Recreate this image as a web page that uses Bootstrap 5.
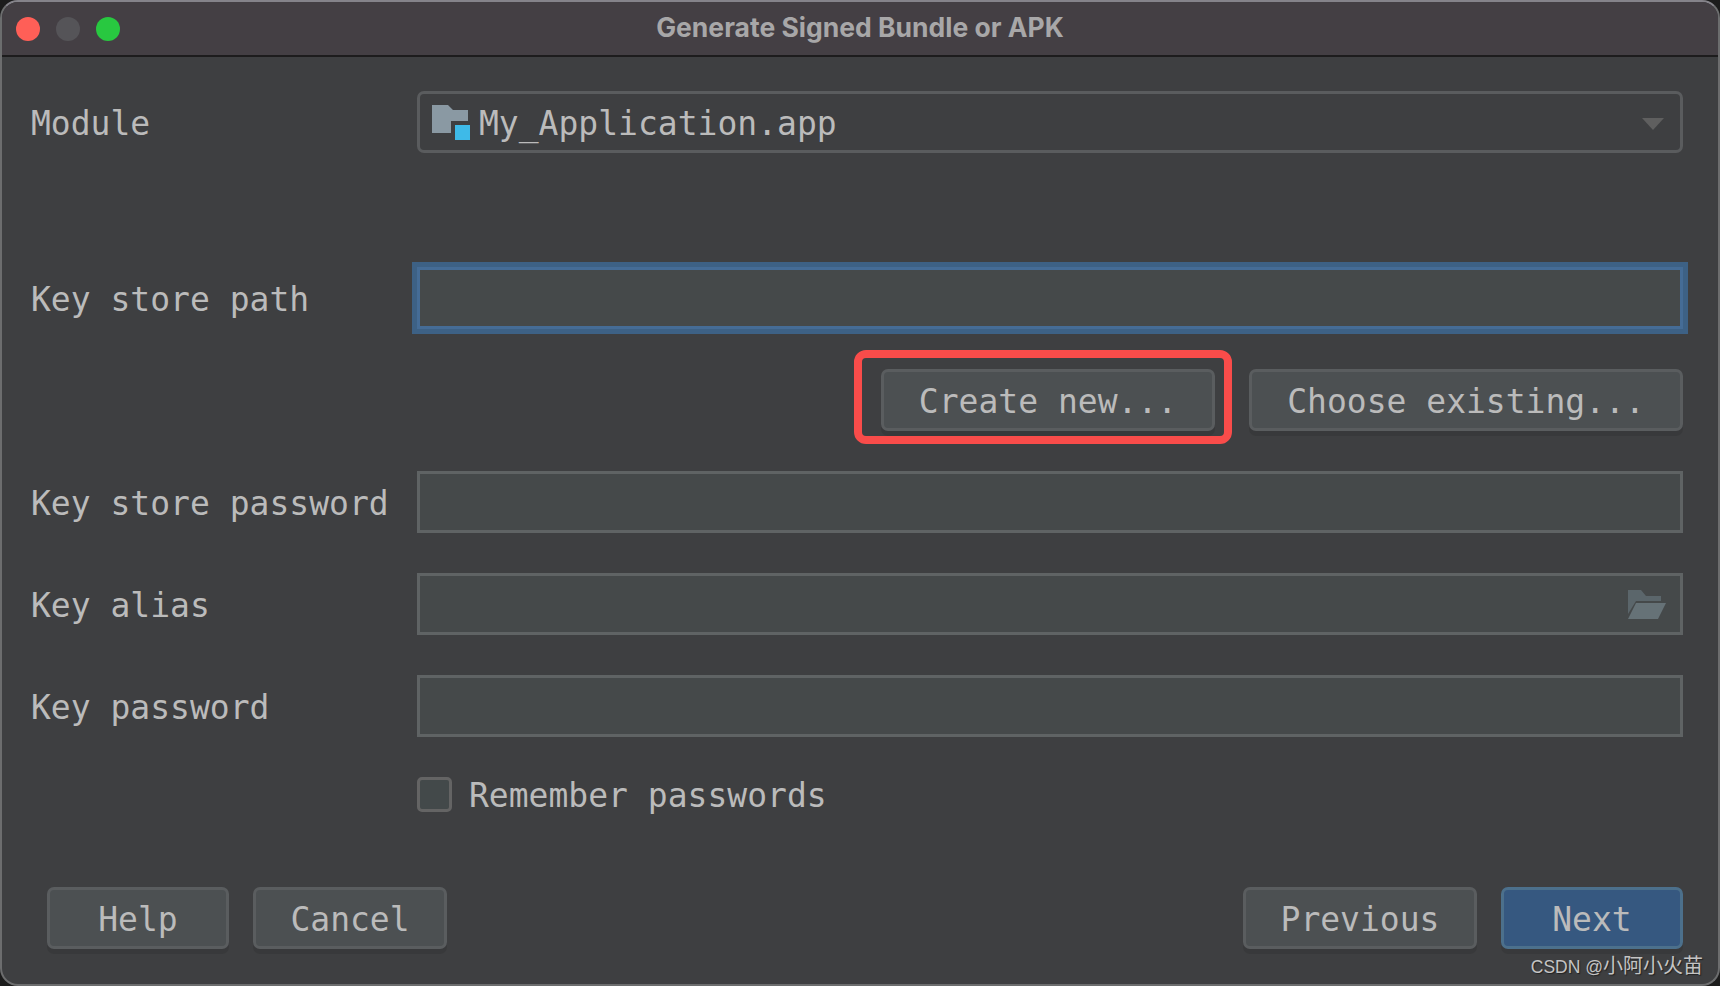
<!DOCTYPE html>
<html lang="en">
<head>
<meta charset="utf-8">
<title>Generate Signed Bundle or APK</title>
<link href="https://cdn.jsdelivr.net/npm/bootstrap@5.3.0/dist/css/bootstrap.min.css" rel="stylesheet">
<style>
html, body { height: 100%; }
body { background: #1c1c1c; overflow: hidden; font-family: "DejaVu Sans Mono", "Liberation Mono", monospace; font-size: 33px; color: #bbbbbb; }
.win { position: relative; width: 1720px; height: 986px; background: #3e3f41; border: 2px solid #6c6d6e; border-top-color: #85838a; border-radius: 18px; overflow: hidden; }
.titlebar { height: 55px; background: #443f44; border-bottom: 2px solid #1d1c1d; position: relative; }
.light { width: 24px; height: 24px; border-radius: 50%; }
.l-red { background: #ff5f57; }
.l-off { background: #555458; }
.l-green { background: #28c840; }
.lights { gap: 16px; padding-left: 14px; }
.wintitle { position: absolute; left: 0; right: 0; top: 9px; text-align: center; font-family: Inter, "Liberation Sans", sans-serif; font-weight: 700; font-size: 26.5px; line-height: 32px; color: #a8a7a8; }
.content { padding: 34px 35px 0 29px; }
.fieldrow { height: 62px; }
.lab { width: 386px; flex: none; line-height: 62px; padding-top: 2px; white-space: pre; }
.form-control.dark-input, .dark-select { flex: 1 1 auto; height: 62px; background: #45494a; border: 3px solid #5f6364; border-radius: 0; color: #bbbbbb; font-size: 33px; box-shadow: none; }
.dark-select { background: #3e3f41; border-color: #5a5c5e; border-radius: 7px; padding-left: 12px; padding-right: 16px; }
.dark-select svg { flex: none; }
.sel-text { margin-left: 9px; padding-top: 3px; }
.arrow-ico { margin-top: 4px; }
.ring { box-shadow: 0 0 0 5px #3d6185 !important; border-color: #456c96 !important; }
.input-wrap { flex: 1 1 auto; position: relative; display: flex; }
.folder-btn { position: absolute; right: 16px; top: 17px; width: 40px; height: 30px; }
.row-path { margin-top: 114px; }
.row-field { margin-top: 40px; }
.actions { height: 62px; margin-top: 40px; gap: 34px; }
.dark-btn.btn { height: 62px; background: #4c5052; border: 3px solid #5a5d5f; border-radius: 7px; color: #bbbbbb; font-size: 33px; line-height: 1; padding: 2px 0 0; box-shadow: 0 5px 0 rgba(0, 0, 0, .09); white-space: pre; }
.dark-btn.b-primary { background: #365880; border-color: #4c708c; }
.b-create { width: 334px; }
.b-choose { width: 434px; }
.b-help { width: 182px; }
.b-cancel { width: 194px; }
.b-prev { width: 234px; }
.b-next { width: 182px; }
.red-box { padding: 11px 9px 5px 19px; margin: -19px -17px -13px -27px; border: 8px solid #f94c4a; border-radius: 12px; }
.check-row { margin-top: 40px; height: 35px; padding-left: 386px; }
.dark-check.form-check-input { width: 35px; height: 35px; margin: 0; background: #43494a; border: 3px solid #646464; border-radius: 5px; flex: none; box-shadow: none; }
.check-lab { margin-left: 17px; line-height: 35px; padding-top: 1px; }
.footer-row { margin-top: 75px; padding-left: 16px; gap: 24px; }
.watermark { position: absolute; right: 15px; bottom: 5px; font-family: "Liberation Sans", "Noto Sans CJK SC", sans-serif; font-size: 20px; line-height: 24px; color: #c4c4c4; text-shadow: 1px 1px 1px #222; }
.wm-latin { font-size: 17.5px; }
</style>
</head>
<body>
<div class="win">
  <div class="titlebar d-flex align-items-center">
    <div class="lights d-flex">
      <div class="light l-red"></div>
      <div class="light l-off"></div>
      <div class="light l-green"></div>
    </div>
    <div class="wintitle">Generate Signed Bundle or APK</div>
  </div>
  <form class="content">
    <div class="fieldrow d-flex">
      <label class="lab">Module</label>
      <div class="dark-select d-flex align-items-center">
        <svg width="38" height="35" viewBox="0 0 38 35"><path d="M0 0H16L21 5H36V28H0Z" fill="#8a99a3"/><rect x="19" y="16" width="19" height="19" fill="#3e3f41"/><rect x="23" y="20" width="15" height="15" fill="#3ebae8"/></svg>
        <span class="sel-text flex-grow-1">My_Application.app</span>
        <svg class="arrow-ico" width="22" height="12" viewBox="0 0 22 12"><path d="M0 0H22L11 12Z" fill="#5f5f5f"/></svg>
      </div>
    </div>
    <div class="fieldrow d-flex row-path">
      <label class="lab">Key store path</label>
      <input class="form-control dark-input ring" type="text">
    </div>
    <div class="actions d-flex justify-content-end">
      <div class="red-box d-flex"><button type="button" class="btn dark-btn b-create">Create new...</button></div>
      <button type="button" class="btn dark-btn b-choose">Choose existing...</button>
    </div>
    <div class="fieldrow d-flex row-field">
      <label class="lab">Key store password</label>
      <input class="form-control dark-input" type="text">
    </div>
    <div class="fieldrow d-flex row-field">
      <label class="lab">Key alias</label>
      <div class="input-wrap">
        <input class="form-control dark-input" type="text">
        <svg class="folder-btn" viewBox="0 0 40 30"><path d="M1 0H14L19 6H34V11H9L1 24Z" fill="#5b666b"/><path d="M9 13H39L31 29H1Z" fill="#667277"/></svg>
      </div>
    </div>
    <div class="fieldrow d-flex row-field">
      <label class="lab">Key password</label>
      <input class="form-control dark-input" type="text">
    </div>
    <div class="check-row d-flex align-items-center">
      <input class="form-check-input dark-check" type="checkbox" id="rem">
      <label class="check-lab" for="rem">Remember passwords</label>
    </div>
    <div class="footer-row d-flex">
      <button type="button" class="btn dark-btn b-help">Help</button>
      <button type="button" class="btn dark-btn b-cancel">Cancel</button>
      <button type="button" class="btn dark-btn b-prev ms-auto">Previous</button>
      <button type="button" class="btn dark-btn b-primary b-next">Next</button>
    </div>
  </form>
  <div class="watermark"><span class="wm-latin">CSDN @</span>小阿小火苗</div>
</div>
<script src="https://cdn.jsdelivr.net/npm/bootstrap@5.3.0/dist/js/bootstrap.bundle.min.js"></script>
</body>
</html>
